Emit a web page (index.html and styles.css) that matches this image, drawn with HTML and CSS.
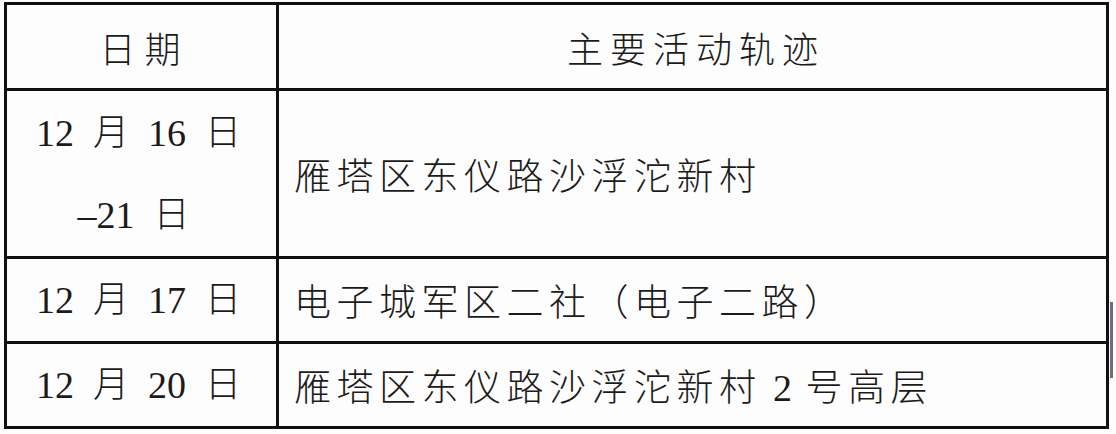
FILE: index.html
```html
<!DOCTYPE html>
<html lang="zh-CN">
<head>
<meta charset="utf-8">
<title>主要活动轨迹</title>
<link rel="stylesheet" href="styles.css">
</head>
<body>
<div class="page">
  <table class="track">
    <colgroup>
      <col class="col-date">
      <col class="col-place">
    </colgroup>
    <thead>
      <tr class="row-head">
        <th class="head-date">日期</th>
        <th class="head-place">主要活动轨迹</th>
      </tr>
    </thead>
    <tbody>
      <tr class="row-1">
        <td class="date">
          <div class="date-line"><span class="num">12</span><span>月</span><span class="num">16</span><span>日</span></div>
          <div class="date-line date-line-2"><span class="num">–21</span><span>日</span></div>
        </td>
        <td class="place">雁塔区东仪路沙浮沱新村</td>
      </tr>
      <tr class="row-2">
        <td class="date">
          <div class="date-line"><span class="num">12</span><span>月</span><span class="num">17</span><span>日</span></div>
        </td>
        <td class="place">电子城军区二社（电子二路）</td>
      </tr>
      <tr class="row-3">
        <td class="date">
          <div class="date-line"><span class="num">12</span><span>月</span><span class="num">20</span><span>日</span></div>
        </td>
        <td class="place">雁塔区东仪路沙浮沱新村<span class="num-inline"> 2 </span>号高层</td>
      </tr>
    </tbody>
  </table>
  <div class="edge-mark"></div>
</div>
</body>
</html>
```
FILE: styles.css
```css
html, body {
  margin: 0;
  padding: 0;
  background: #fdfdfd;
}

.page {
  display: flex;
  align-items: flex-start;
  padding: 2px 0 0 4px;
  width: 1116px;
  height: 434px;
  box-sizing: border-box;
}

.track {
  border-collapse: collapse;
  table-layout: fixed;
  width: 1105px;
  border: 3px solid #111;
  font-family: "Liberation Serif", "Noto Sans CJK SC", serif;
  font-size: 36px;
  font-weight: 300;
  color: #1b1b1b;
}

.col-date { width: 272px; }
.col-place { width: 830px; }

.track th,
.track td {
  border: 3px solid #111;
  padding: 0;
  font-weight: 300;
}

.row-head { height: 86px; }
.row-1 { height: 168px; }
.row-2 { height: 84px; }
.row-3 { height: 85px; }

.head-date {
  text-align: center;
  letter-spacing: 9px;
  text-indent: 6px;
}

.head-place {
  text-align: center;
  letter-spacing: 7px;
  text-indent: 7px;
}

.date {
  text-align: center;
  vertical-align: middle;
}

.date-line {
  display: flex;
  justify-content: center;
  align-items: center;
  gap: 19px;
  height: 82px;
  line-height: 82px;
  padding-right: 6px;
}

.date-line-2 {
  padding-right: 16px;
}

.num {
  font-family: "Liberation Serif", serif;
  font-size: 38px;
  letter-spacing: 0;
}

.place {
  text-align: left;
  padding-left: 15px !important;
  font-size: 37px;
  letter-spacing: 5.5px;
  vertical-align: middle;
}

.num-inline {
  font-family: "Liberation Serif", serif;
  font-size: 38px;
  letter-spacing: 2px;
  white-space: pre;
}

.edge-mark {
  width: 3px;
  height: 76px;
  margin-top: 300px;
  margin-left: 1px;
  background: #6a6f78;
}
```
